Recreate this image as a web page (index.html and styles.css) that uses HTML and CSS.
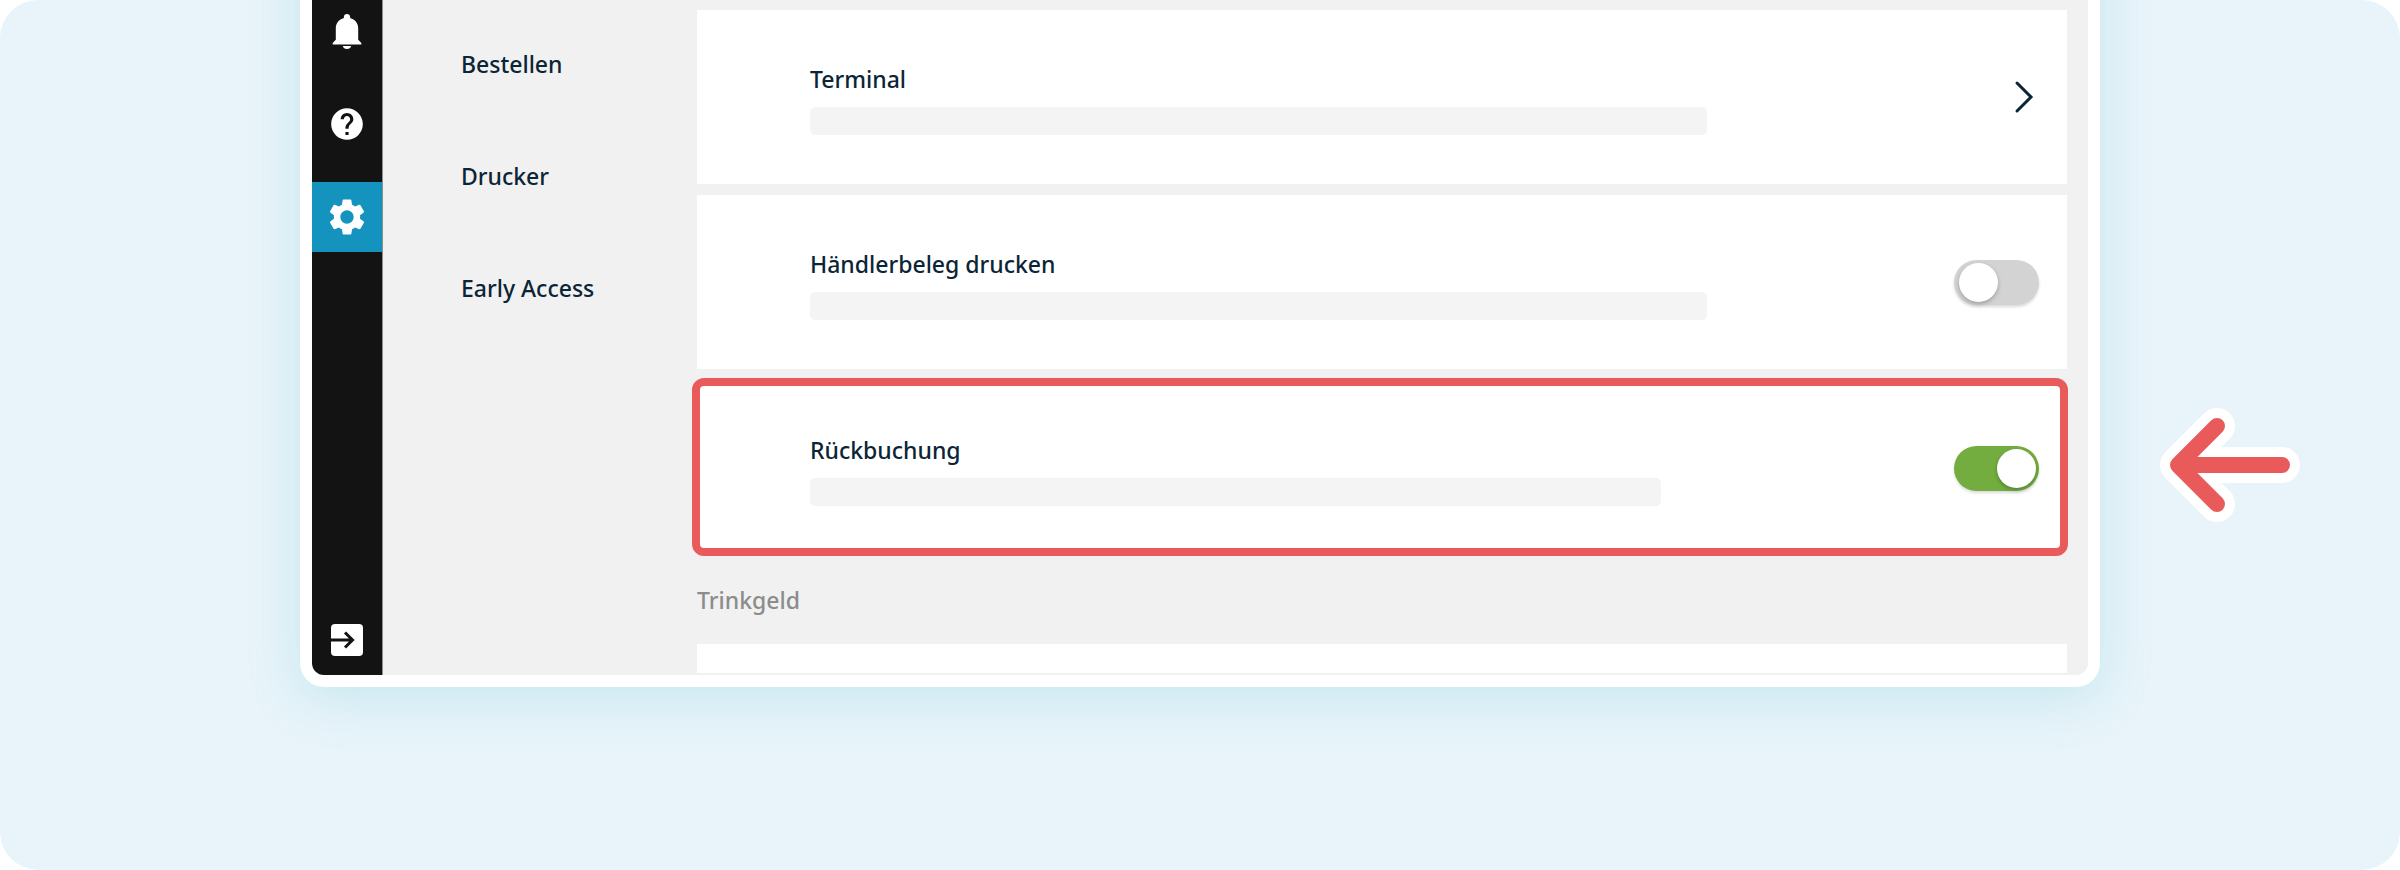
FILE: index.html
```html
<!DOCTYPE html>
<html lang="de">
	<head>
		<meta charset="UTF-8">
		<meta name="viewport" content="width=device-width, initial-scale=1">
		<title>Einstellungen</title>
		<link rel="stylesheet" href="styles.css">
	</head>
	<body>
		<div class="stage">
			<div class="frame">
				<div class="app">
					<aside class="sidebar">
						<button class="side-btn" type="button" aria-label="Mitteilungen">
							<svg width="42" height="42" viewBox="0 -.5 24 24"><path d="M12 21.800c1.200 0 2.200-.7 2.400-1.700H9.600c.2 1 1.200 1.700 2.400 1.700zM18.400 16.500V10c0-3-1.800-5.200-4.600-6V3.500c0-1-.8-1.700-1.800-1.700s-1.800.7-1.800 1.700V4C7.400 4.800 5.600 7 5.600 10v6.500L3.800 18.300v.9h16.400v-.9z"/></svg>
						</button>
						<button class="side-btn" type="button" aria-label="Hilfe">
							<svg width="38" height="38" viewBox="0 0 24 24"><path d="M12 2C6.480 2 2 6.480 2 12s4.480 10 10 10 10-4.480 10-10S17.520 2 12 2zm1 17h-2v-2h2v2zm2.070-7.750l-.9.920C13.450 12.900 13 13.500 13 15h-2v-.5c0-1.100.45-2.100 1.170-2.830l1.240-1.260c.37-.36.59-.86.59-1.410 0-1.100-.9-2-2-2s-2 .9-2 2H8c0-2.210 1.790-4 4-4s4 1.790 4 4c0 .88-.36 1.680-.93 2.250z"/></svg>
						</button>
						<button class="side-btn active" type="button" aria-label="Einstellungen">
							<svg width="42" height="42" viewBox="0 0 24 24"><path d="M19.430 12.980c.04-.32.07-.64.07-.98s-.03-.66-.07-.98l2.110-1.650c.19-.15.24-.42.12-.64l-2-3.460c-.12-.22-.39-.3-.61-.22l-2.490 1c-.52-.4-1.080-.73-1.690-.98l-.38-2.650C14.460 2.180 14.250 2 14 2h-4c-.25 0-.46.18-.49.42l-.38 2.650c-.61.25-1.170.59-1.690.98l-2.490-1c-.23-.09-.49 0-.61.22l-2 3.460c-.13.22-.07.49.12.64l2.110 1.650c-.04.32-.07.65-.07.98s.03.66.07.98l-2.110 1.650c-.19.15-.24.42-.12.64l2 3.460c.12.22.39.3.61.22l2.490-1c.52.4 1.080.73 1.690.98l.38 2.650c.03.24.24.42.49.42h4c.25 0 .46-.18.49-.42l.38-2.650c.61-.25 1.170-.59 1.690-.98l2.490 1c.23.09.49 0 .61-.22l2-3.460c.12-.22.07-.49-.12-.64l-2.110-1.650zM12 15.800c-2.100 0-3.800-1.700-3.800-3.800s1.700-3.800 3.800-3.800 3.800 1.700 3.800 3.800-1.700 3.800-3.800 3.800z"/></svg>
						</button>
						<button class="side-btn logout" type="button" aria-label="Abmelden">
							<svg width="32" height="32" viewBox="0 0 32 32"><rect width="32" height="32" rx="4"/><path class="cut" d="M0 16h21M14 8.500l7.500 7.500-7.500 7.500"/></svg>
						</button>
					</aside>
					<nav class="menu">
						<a href="#bestellen">Bestellen</a>
						<a href="#drucker">Drucker</a>
						<a href="#early-access">Early Access</a>
					</nav>
					<main class="content">
						<a class="card" href="#terminal">
							<div class="info">
								<span class="title">Terminal</span>
								<div class="bar"></div>
							</div>
							<svg class="chevron" width="20" height="34" viewBox="0 0 20 34"><path d="M3 3l14 14L3 31"/></svg>
						</a>
						<div class="card">
							<div class="info">
								<label class="title" for="beleg">Händlerbeleg drucken</label>
								<div class="bar"></div>
							</div>
							<input class="toggle" type="checkbox" id="beleg">
						</div>
						<div class="card marked">
							<div class="info">
								<label class="title" for="rueckbuchung">Rückbuchung</label>
								<div class="bar short"></div>
							</div>
							<input class="toggle" type="checkbox" id="rueckbuchung" checked>
						</div>
						<h2 class="section">Trinkgeld</h2>
						<div class="next"></div>
					</main>
				</div>
			</div>
			<svg class="arrow" width="140" height="114" viewBox="0 0 140 114">
				<path class="arrow-edge" d="M122 57H18M57 18L18 57l39 39"/>
				<path class="arrow-line" d="M122 57H18M57 18L18 57l39 39"/>
			</svg>
		</div>
	</body>
</html>
```
FILE: styles.css
```css
*{margin:0;padding:0;box-sizing: border-box;}
body{
	font-family: "Noto Sans", "Open Sans", sans-serif;
	font-size: 23px;
	line-height: 32px;
	font-weight: 500;
	color: #0b2536;
	background: #fff;
}
a{text-decoration: none;color: inherit;}
button{border: 0;background: none;cursor: pointer;}

.stage{
	display: grid;
	grid-template-columns: 1fr 6fr 1fr;
	align-items: start;
	min-height: 100vh;
	overflow: hidden;
	border-radius: 38px;
	background: #e8f4fa;
}

/* device window, its top runs out of the stage */
.frame{
	grid-column: 2;
	margin-top: -80px;
	padding: 80px 12px 12px;
	border-radius: 24px;
	background: #fff;
	box-shadow: 0 10px 50px rgba(95,190,210,.25);
}
.app{
	display: flex;
	overflow: hidden;
	border-radius: 0 0 12px 12px;
	background: #f1f1f1;
}

.sidebar{
	display: flex;
	flex-direction: column;
	gap: 23px;
	width: 71px;
	margin-top: -4px;
	border-right: 1px solid #8c8c8c;
	background: #131313;
}
.side-btn{
	display: flex;
	align-items: center;
	justify-content: center;
	height: 70px;
	fill: #fff;
}
.side-btn.active{background: #1593bf;}
.side-btn.logout{margin-top: auto;}
.cut{
	fill: none;
	stroke: #131313;
	stroke-width: 3;
}

.menu{
	display: flex;
	flex-direction: column;
	gap: 80px;
	width: 314px;
	padding: 48px 0 0 78px;
}

.content{
	flex: 1;
	padding: 10px 21px 2px 0;
}
.card{
	display: flex;
	align-items: center;
	min-height: 174px;
	margin-bottom: 11px;
	padding: 0 28px 0 113px;
	background: #fff;
}
.info{
	flex: 1;
	padding-top: 3px;
}
.title{display: block;}
.bar{
	max-width: 897px;
	height: 28px;
	margin-top: 12px;
	border-radius: 5px;
	background: #f4f4f4;
}
.bar.short{max-width: 851px;}
.chevron{
	margin-right: 5px;
	fill: none;
	stroke: #0b2536;
	stroke-width: 3;
	stroke-linecap: round;
}

.marked{
	min-height: 178px;
	margin: -2px -1px 0 -5px;
	padding: 2px 21px 0 110px;
	border: 8px solid #e95b5b;
	border-radius: 12px;
}

.toggle{
	appearance: none;
	display: flex;
	width: 85px;
	height: 45px;
	padding: 3px 3px 3px 5px;
	border-radius: 23px;
	background: #d3d3d3;
	box-shadow: 0 2px 3px rgba(0,0,0,.15);
	cursor: pointer;
}
.toggle::before{
	content: "";
	width: 39px;
	height: 39px;
	border-radius: 50%;
	background: #fff;
	box-shadow: 0 2px 4px rgba(0,0,0,.25);
}
.toggle:checked{
	justify-content: flex-end;
	background: #73ad3f;
}

.section{
	margin: 28px 0;
	font-size: 23px;
	font-weight: 500;
	color: #8c8c8c;
}
.next{
	height: 29px;
	background: #fff;
}

/* pointer next to the marked card */
.arrow{
	margin: 408px 0 0 60px;
	fill: none;
	stroke-linecap: round;
	stroke-linejoin: round;
}
.arrow-edge{
	stroke: #fff;
	stroke-width: 36;
}
.arrow-line{
	stroke: #e95b5b;
	stroke-width: 16;
}
```
